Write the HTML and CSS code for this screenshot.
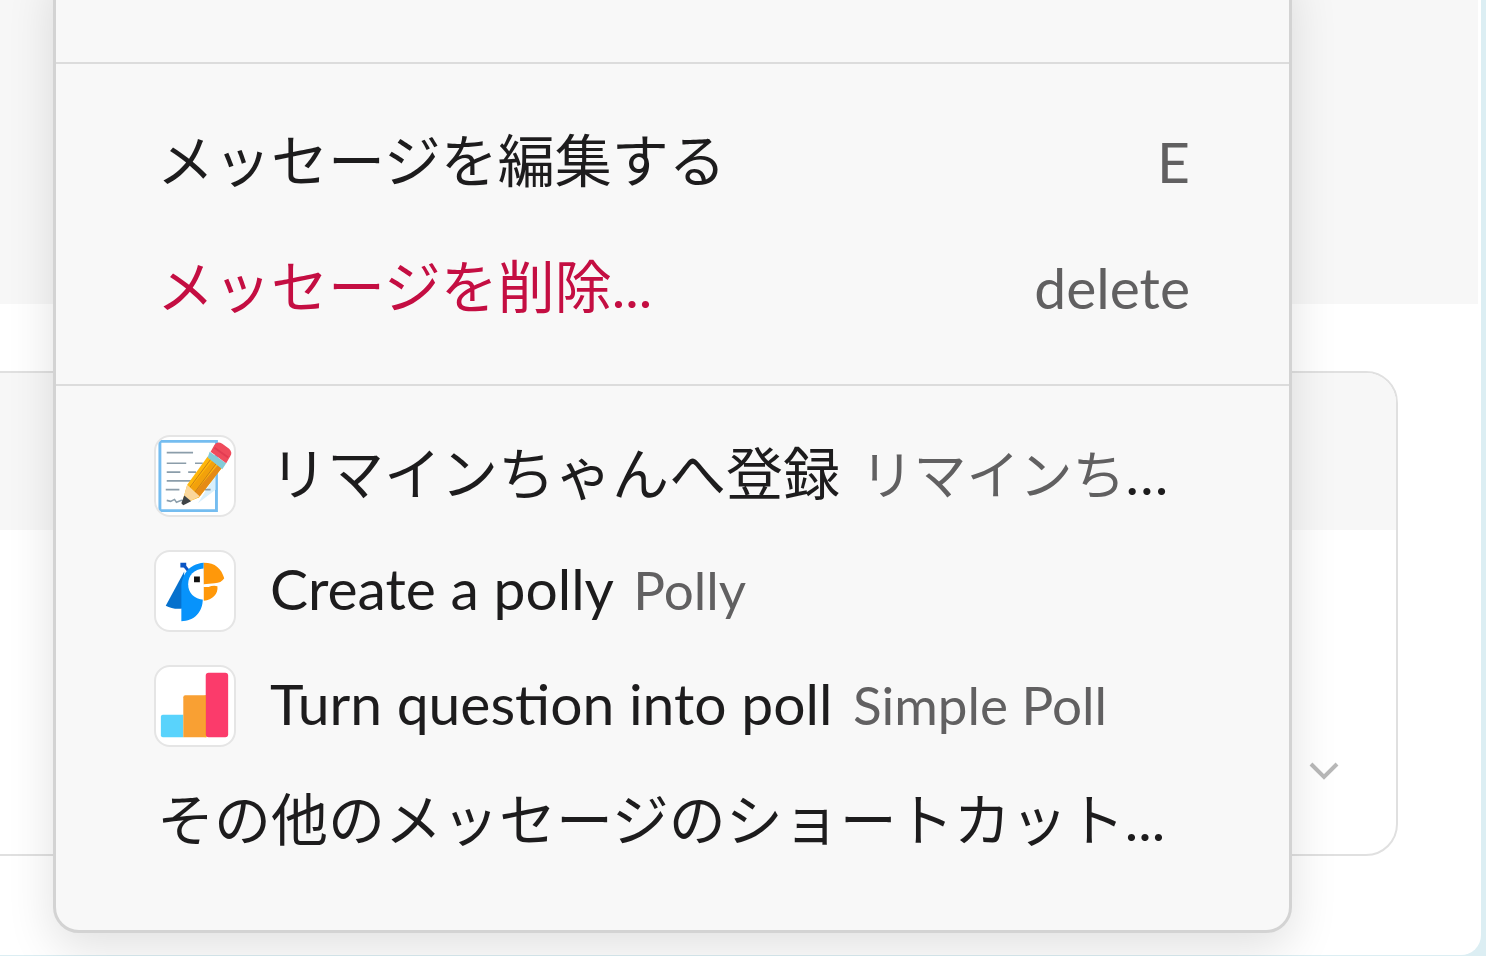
FILE: index.html
```html
<!DOCTYPE html>
<html lang="ja">
<head>
<meta charset="utf-8">
<meta name="viewport" content="width=device-width, initial-scale=1">
<title>メッセージ</title>
<link rel="stylesheet" href="styles.css">
</head>
<body>
<main class="window">
  <div class="message"></div>
  <div class="composer">
    <div class="toolbar"></div>
    <div class="actions">
      <button class="send-options" type="button" aria-label="送信オプション">
        <svg width="32" height="24" viewBox="0 0 32 24"><path d="M3 5l13 13L29 5" fill="none" stroke="#b8b8b8" stroke-width="4"/></svg>
      </button>
    </div>
  </div>
</main>

<div class="menu" role="menu">
  <div class="group group-top"></div>
  <div class="group group-edit">
    <button class="item" type="button" role="menuitem"><span class="label">メッセージを編集する</span><kbd class="key">E</kbd></button>
    <button class="item danger" type="button" role="menuitem"><span class="label">メッセージを削除...</span><kbd class="key">delete</kbd></button>
  </div>
  <div class="group group-apps">
    <button class="item" type="button" role="menuitem">
      <svg class="icon" viewBox="0 0 80 80" aria-hidden="true">
        <path d="M4 4.500h58v71H4z" fill="#fff" stroke="#75bdf0" stroke-width="3"/>
        <path d="M43 68l18-14V39z" fill="#d9f0fc"/>
        <path d="M11 16h27M11 27h20M40 27h8M11 36h14M33 36h8M11 45h25M10 54h14M50 54h6M11 65l4 1 4-2 2 3 5-2 3 1" fill="none" stroke="#8b9daa" stroke-width="1.600"/>
        <path d="M53 20l15 11-24 31-12 5-4-4 4-14z" fill="#ffb70b"/>
        <path d="M58 24l4 3-24 32-5-4z" fill="#f2a10b"/>
        <path d="M64 28l4 3-24 31-6-3z" fill="#e58b16"/>
        <path d="M56 23L33 54M62 27L38 59" stroke="#c87d18" stroke-width="1"/>
        <path d="M32 49l13 12-13 6-4-4z" fill="#fbd79b"/>
        <path d="M29 60l7 6-8 4-2-2z" fill="#3e4347"/>
        <path d="M55 15l17 12-4 6-15-12z" fill="#84cbd7"/>
        <path d="M60 8q3-4 8-1l7 5q4 4 1 8l-4 7-16-12z" fill="#ef4b5c"/>
        <path d="M60 11l14 10" stroke="#e23c52" stroke-width="2"/>
      </svg>
      <span class="label app">リマインちゃんへ登録 <span class="source">リマインち</span>…</span>
    </button>
    <button class="item" type="button" role="menuitem">
      <svg class="icon" viewBox="0 0 80 80" aria-hidden="true">
        <path d="M29 20L10 55q7 4 17 3z" fill="#0671cd"/>
        <path d="M28 13l5 6" stroke="#0b55c4" stroke-width="3"/>
        <path d="M25 11h6v5h-6z" fill="#0b55c4"/>
        <path d="M49 11C33 12 26 25 26 36v35c13 0 22-9 22-23z" fill="#0793fb"/>
        <path d="M49 17c-10 1-16 7-16 16s6 15 16 16z" fill="#fff"/>
        <path d="M39 25h6v6h-6z" fill="#111"/>
        <path d="M49 11c12 0 18 6 21 16q-3 5-10 5l-11 1zM49 36l5 0q4-2 9-1c1 8-5 14-14 15z" fill="#ff980a"/>
      </svg>
      <span class="label app">Create a polly <span class="source">Polly</span></span>
    </button>
    <button class="item" type="button" role="menuitem">
      <svg class="icon" viewBox="0 0 80 80" aria-hidden="true">
        <path d="M28 49H7q-2 0-2 2v19q0 2 2 2h21z" fill="#59d3fc"/>
        <path d="M51 29H30q-2 0-2 2v41h23z" fill="#f9a033"/>
        <path d="M50 29h2v43h-2z" fill="#f7b51c"/>
        <rect x="51" y="6" width="23" height="66" rx="3" fill="#fb3b6b"/>
      </svg>
      <span class="label app">Turn question into poll <span class="source">Simple Poll</span></span>
    </button>
    <button class="item" type="button" role="menuitem"><span class="label">その他のメッセージのショートカット...</span></button>
  </div>
</div>
</body>
</html>
```
FILE: styles.css
```css
* {
  box-sizing: border-box;
}

body {
  margin: 0;
  padding: 0 5px 1px 0;
  min-height: 100vh;
  display: flex;
  overflow: hidden;
  background: #dceef3;
  font-family: Lato, "Noto Sans CJK JP", sans-serif;
  color: #1d1c1d;
}

button {
  border: 0;
  background: none;
  font: inherit;
  color: inherit;
}

.window {
  flex: 1;
  padding-right: 3px;
  background: #fff;
  border-radius: 0 0 20px 0;
}

.message {
  height: 304px;
  background: #f7f7f7;
}

.composer {
  margin: 67px 80px 0 -40px;
  border: 2px solid #e0e0e0;
  border-radius: 32px;
  overflow: hidden;
}

.toolbar {
  height: 157px;
  background: #f7f7f7;
}

.actions {
  height: 324px;
  padding: 0 52px 67px 0;
  display: flex;
  justify-content: flex-end;
  align-items: flex-end;
}

.send-options {
  display: flex;
  padding: 4px;
}

.menu {
  position: absolute;
  top: -40px;
  left: 53px;
  right: 194px;
  background: #f8f8f8;
  border: 3px solid #d3d3d3;
  border-radius: 26px;
  box-shadow: 0 16px 48px rgba(0, 0, 0, 0.12);
}

.group + .group {
  border-top: 2px solid #dcdcdc;
}

.group-top {
  height: 99px;
}

.group-edit {
  padding: 34px 0;
}

.group-edit .item {
  height: 126px;
}

.group-apps {
  padding: 32px 0 52px;
}

.item {
  display: flex;
  align-items: center;
  width: 100%;
  height: 115px;
  padding: 0 99px 0 98px;
  font-size: 57px;
  line-height: 80px;
  text-align: left;
  white-space: nowrap;
}

.label {
  flex: 1;
  min-width: 0;
  padding: 0 0 3px 3px;
}

.danger .label {
  color: #c40e42;
}

.key {
  font: inherit;
  color: #616061;
}

.icon {
  flex: none;
  width: 82px;
  height: 82px;
  margin-right: 31px;
  background: #fff;
  border: 2px solid #e5e5e5;
  border-radius: 16px;
}

.source {
  margin-left: 6px;
  font-size: 53px;
  color: #616061;
}
```
